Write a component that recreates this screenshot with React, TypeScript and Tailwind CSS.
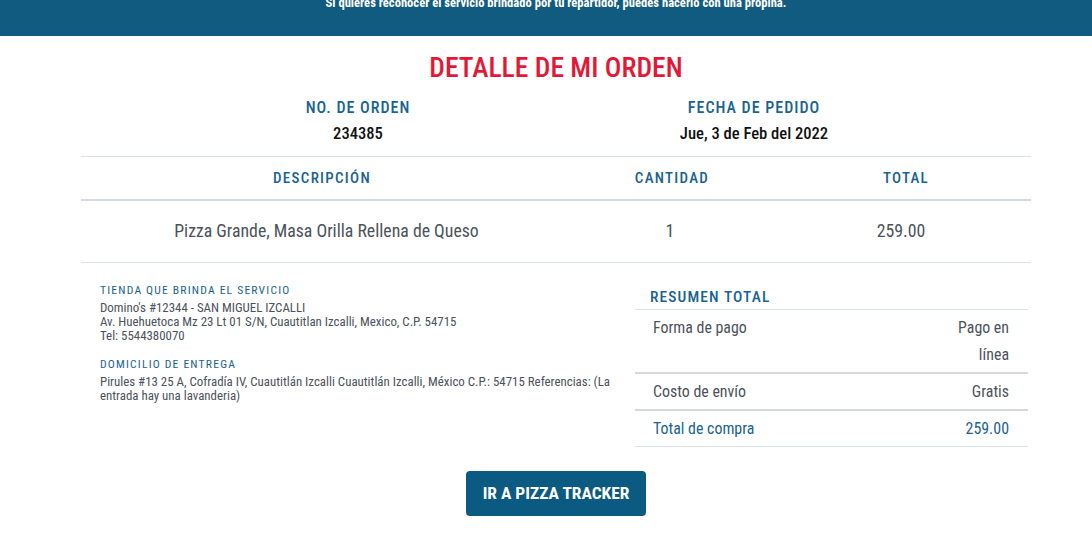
import React from "react";

export default function App() {
  const blue = "text-[#1a6390]";
  return (
    <div className="w-[1092px] min-h-[545px] bg-white font-['Roboto',sans-serif] font-stretch-condensed overflow-hidden">
      <div className="h-[36px] bg-[#125b80] overflow-hidden pl-[20px]">
        <p className="text-center text-white text-[12.6px] font-bold leading-[14px] -mt-[4px]">
          Si quieres reconocer el servicio brindado por tu repartidor, puedes hacerlo con una propina.
        </p>
      </div>
      <div className="pl-[20px]">
        <h1 className="text-center text-[#e31837] text-[27.6px] font-medium leading-[34px] mt-[15px]">
          DETALLE DE MI ORDEN
        </h1>
        <div className="flex justify-center mt-[13px]">
          <div className="w-[396px] text-center">
            <div className={`${blue} text-[16px] font-medium tracking-[1px] leading-[20px]`}>NO. DE ORDEN</div>
            <div className="text-[#111] text-[16.6px] font-medium leading-[20px] mt-[6px]">234385</div>
          </div>
          <div className="w-[396px] text-center">
            <div className={`${blue} text-[16px] font-medium tracking-[1px] leading-[20px]`}>FECHA DE PEDIDO</div>
            <div className="text-[#111] text-[16.6px] font-medium leading-[20px] mt-[6px]">Jue, 3 de Feb del 2022</div>
          </div>
        </div>
        <div className="w-[950px] mx-auto mt-[12px]">
          <div className="flex border-t border-[#dde2e7] border-b-2 border-b-[#d3d9df] h-[45px] items-center">
            <div className={`w-[482px] text-center ${blue} text-[15px] font-medium tracking-[1.3px]`}>DESCRIPCIÓN</div>
            <div className={`w-[218px] text-center ${blue} text-[15px] font-medium tracking-[1.3px]`}>CANTIDAD</div>
            <div className={`w-[250px] text-center ${blue} text-[15px] font-medium tracking-[1.3px]`}>TOTAL</div>
          </div>
          <div className="flex border-b border-[#dde2e7] h-[62px] items-center text-[#4b525b] text-[17.8px]">
            <div className="w-[482px] pl-[9px] text-center">Pizza Grande, Masa Orilla Rellena de Queso</div>
            <div className="w-[218px] pr-[4px] text-center">1</div>
            <div className="w-[250px] pr-[10px] text-center">259.00</div>
          </div>
          <div className="flex mt-[20px]">
            <div className="w-[553px] pl-[19px] pr-[10px] text-[#4b525b]">
              <div className={`${blue} text-[11.6px] font-normal tracking-[1.2px] leading-[14px]`}>TIENDA QUE BRINDA EL SERVICIO</div>
              <div className="text-[12.9px] leading-[14px] mt-[4px]">
                <div>Domino's #12344 - SAN MIGUEL IZCALLI</div>
                <div>Av. Huehuetoca Mz 23 Lt 01 S/N, Cuautitlan Izcalli, Mexico, C.P. 54715</div>
                <div>Tel: 5544380070</div>
              </div>
              <div className={`${blue} text-[11.6px] font-normal tracking-[1.2px] leading-[14px] mt-[14px]`}>DOMICILIO DE ENTREGA</div>
              <div className="text-[12.9px] leading-[14px] mt-[4px]">
                Pirules #13 25 A, Cofradía IV, Cuautitlán Izcalli Cuautitlán Izcalli, México C.P.: 54715 Referencias: (La entrada hay una lavanderia)
              </div>
            </div>
            <div className="w-[393px] ml-[1px]">
              <div className={`${blue} text-[15.5px] font-medium tracking-[1.1px] leading-[18px] pl-[15px] pt-[5px] pb-[3px] border-b border-[#dde2e7]`}>RESUMEN TOTAL</div>
              <div className="flex justify-between pl-[18px] pr-[19px] py-[4px] leading-[27px] text-[15.9px] text-[#4b525b] border-b-2 border-[#d3d9df]">
                <span>Forma de pago</span>
                <span className="text-right"><span className="block">Pago en</span><span className="block">línea</span></span>
              </div>
              <div className="flex justify-between pl-[18px] pr-[19px] py-[4px] leading-[27px] text-[15.9px] text-[#4b525b] border-b-2 border-[#d3d9df]">
                <span>Costo de envío</span>
                <span>Gratis</span>
              </div>
              <div className={`flex justify-between pl-[18px] pr-[19px] py-[4px] leading-[27px] text-[15.9px] ${blue} border-b border-[#dde2e7]`}>
                <span>Total de compra</span>
                <span>259.00</span>
              </div>
            </div>
          </div>
          <div className="flex justify-center mt-[24px]">
            <button className="w-[180px] h-[45px] rounded-[4px] bg-[#0b5a82] text-white text-[17.4px] font-bold">
              IR A PIZZA TRACKER
            </button>
          </div>
        </div>
      </div>
    </div>
  );
}
